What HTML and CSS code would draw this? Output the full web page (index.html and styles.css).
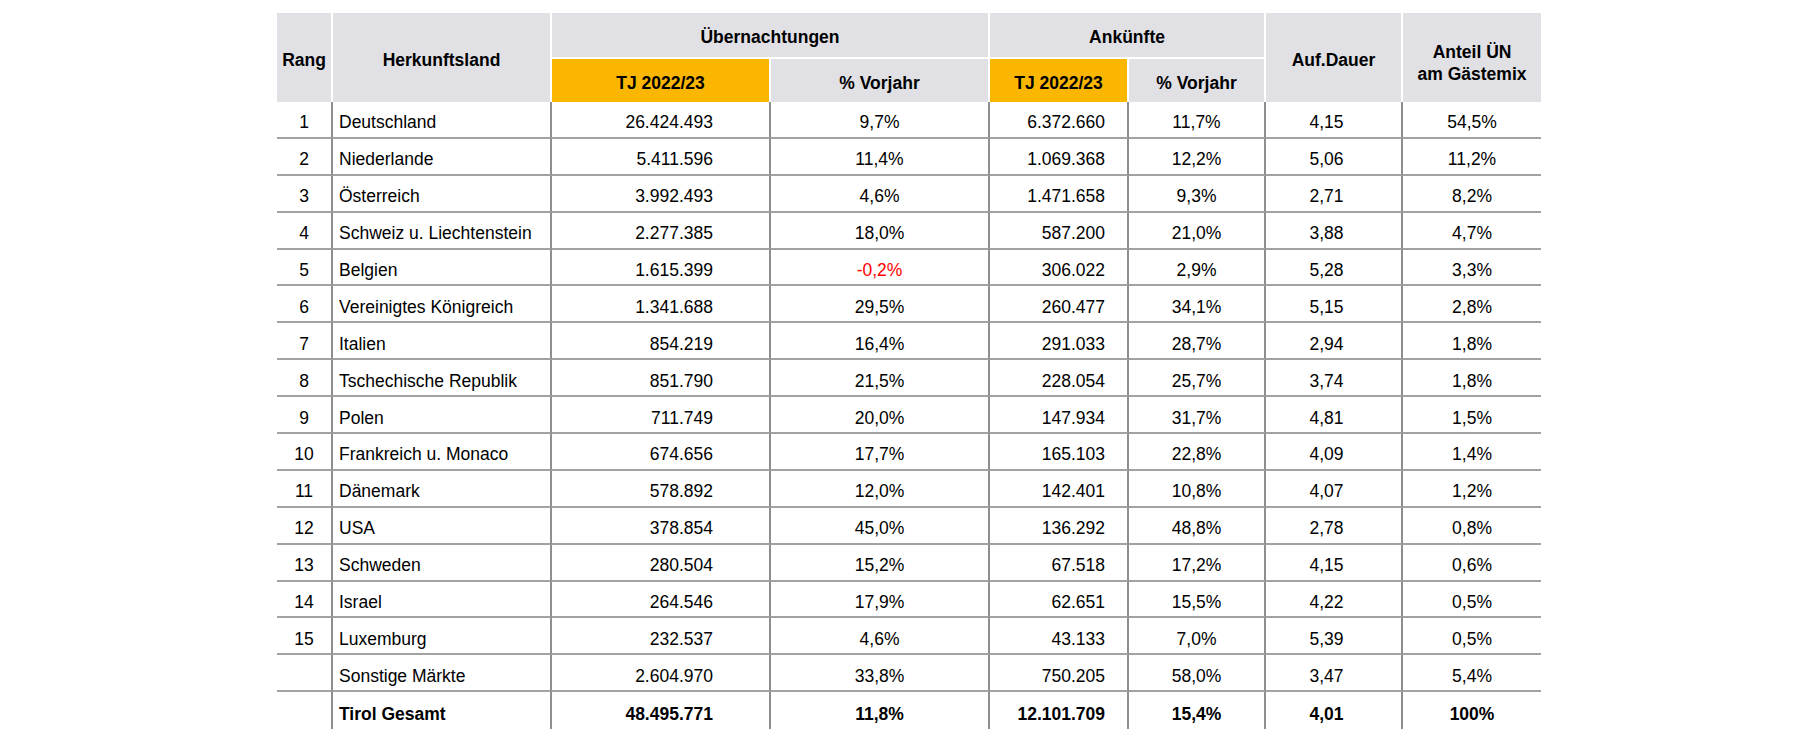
FILE: index.html
```html
<!DOCTYPE html>
<html lang="de">
<head>
<meta charset="utf-8">
<title>Herkunftsländer Tirol TJ 2022/23</title>
<link rel="stylesheet" href="styles.css">
</head>
<body>
<div class="page">
<table class="stats">
  <colgroup>
    <col class="c-rang"><col class="c-land"><col class="c-ue"><col class="c-uep"><col class="c-an"><col class="c-anp"><col class="c-auf"><col class="c-ant">
  </colgroup>
  <thead>
    <tr class="h1">
      <th rowspan="2">Rang</th>
      <th rowspan="2">Herkunftsland</th>
      <th colspan="2" class="grp">Übernachtungen</th>
      <th colspan="2" class="grp">Ankünfte</th>
      <th rowspan="2">Auf.Dauer</th>
      <th rowspan="2" class="last two">Anteil ÜN<br>am Gästemix</th>
    </tr>
    <tr class="h2">
      <th class="tj">TJ 2022/23</th>
      <th>% Vorjahr</th>
      <th class="tj">TJ 2022/23</th>
      <th>% Vorjahr</th>
    </tr>
  </thead>
  <tbody>
    <tr><td class="rang">1</td><td class="land">Deutschland</td><td class="ue">26.424.493</td><td class="pct">9,7%</td><td class="an">6.372.660</td><td class="pct">11,7%</td><td class="auf">4,15</td><td class="ant">54,5%</td></tr>
    <tr><td class="rang">2</td><td class="land">Niederlande</td><td class="ue">5.411.596</td><td class="pct">11,4%</td><td class="an">1.069.368</td><td class="pct">12,2%</td><td class="auf">5,06</td><td class="ant">11,2%</td></tr>
    <tr><td class="rang">3</td><td class="land">Österreich</td><td class="ue">3.992.493</td><td class="pct">4,6%</td><td class="an">1.471.658</td><td class="pct">9,3%</td><td class="auf">2,71</td><td class="ant">8,2%</td></tr>
    <tr><td class="rang">4</td><td class="land">Schweiz u. Liechtenstein</td><td class="ue">2.277.385</td><td class="pct">18,0%</td><td class="an">587.200</td><td class="pct">21,0%</td><td class="auf">3,88</td><td class="ant">4,7%</td></tr>
    <tr><td class="rang">5</td><td class="land">Belgien</td><td class="ue">1.615.399</td><td class="pct neg">-0,2%</td><td class="an">306.022</td><td class="pct">2,9%</td><td class="auf">5,28</td><td class="ant">3,3%</td></tr>
    <tr><td class="rang">6</td><td class="land">Vereinigtes Königreich</td><td class="ue">1.341.688</td><td class="pct">29,5%</td><td class="an">260.477</td><td class="pct">34,1%</td><td class="auf">5,15</td><td class="ant">2,8%</td></tr>
    <tr><td class="rang">7</td><td class="land">Italien</td><td class="ue">854.219</td><td class="pct">16,4%</td><td class="an">291.033</td><td class="pct">28,7%</td><td class="auf">2,94</td><td class="ant">1,8%</td></tr>
    <tr><td class="rang">8</td><td class="land">Tschechische Republik</td><td class="ue">851.790</td><td class="pct">21,5%</td><td class="an">228.054</td><td class="pct">25,7%</td><td class="auf">3,74</td><td class="ant">1,8%</td></tr>
    <tr><td class="rang">9</td><td class="land">Polen</td><td class="ue">711.749</td><td class="pct">20,0%</td><td class="an">147.934</td><td class="pct">31,7%</td><td class="auf">4,81</td><td class="ant">1,5%</td></tr>
    <tr><td class="rang">10</td><td class="land">Frankreich u. Monaco</td><td class="ue">674.656</td><td class="pct">17,7%</td><td class="an">165.103</td><td class="pct">22,8%</td><td class="auf">4,09</td><td class="ant">1,4%</td></tr>
    <tr><td class="rang">11</td><td class="land">Dänemark</td><td class="ue">578.892</td><td class="pct">12,0%</td><td class="an">142.401</td><td class="pct">10,8%</td><td class="auf">4,07</td><td class="ant">1,2%</td></tr>
    <tr><td class="rang">12</td><td class="land">USA</td><td class="ue">378.854</td><td class="pct">45,0%</td><td class="an">136.292</td><td class="pct">48,8%</td><td class="auf">2,78</td><td class="ant">0,8%</td></tr>
    <tr><td class="rang">13</td><td class="land">Schweden</td><td class="ue">280.504</td><td class="pct">15,2%</td><td class="an">67.518</td><td class="pct">17,2%</td><td class="auf">4,15</td><td class="ant">0,6%</td></tr>
    <tr><td class="rang">14</td><td class="land">Israel</td><td class="ue">264.546</td><td class="pct">17,9%</td><td class="an">62.651</td><td class="pct">15,5%</td><td class="auf">4,22</td><td class="ant">0,5%</td></tr>
    <tr><td class="rang">15</td><td class="land">Luxemburg</td><td class="ue">232.537</td><td class="pct">4,6%</td><td class="an">43.133</td><td class="pct">7,0%</td><td class="auf">5,39</td><td class="ant">0,5%</td></tr>
    <tr><td class="rang"></td><td class="land">Sonstige Märkte</td><td class="ue">2.604.970</td><td class="pct">33,8%</td><td class="an">750.205</td><td class="pct">58,0%</td><td class="auf">3,47</td><td class="ant">5,4%</td></tr>
    <tr class="total"><td class="rang"></td><td class="land">Tirol Gesamt</td><td class="ue">48.495.771</td><td class="pct">11,8%</td><td class="an">12.101.709</td><td class="pct">15,4%</td><td class="auf">4,01</td><td class="ant">100%</td></tr>
  </tbody>
</table>
</div>
</body>
</html>
```

FILE: styles.css
```css
html, body {
  margin: 0;
  padding: 0;
  background: #ffffff;
}

.page {
  padding: 13px 0 0 277px;
}

.stats {
  border-collapse: separate;
  border-spacing: 0;
  table-layout: fixed;
  width: 1264px;
  font-family: "Liberation Sans", Arial, sans-serif;
  font-size: 17.5px;
  color: #000;
}

.c-rang { width: 56px; }
.c-land { width: 219px; }
.c-ue { width: 219px; }
.c-uep { width: 219px; }
.c-an { width: 139px; }
.c-anp { width: 137px; }
.c-auf { width: 137px; }
.c-ant { width: 138px; }

.stats th {
  background: #e1e0e5;
  font-weight: bold;
  text-align: center;
  vertical-align: middle;
  padding: 4px 0 0 0;
  border-right: 2px solid #ffffff;
  line-height: 22px;
}

.stats th.last {
  border-right: none;
}

.stats th.two {
  padding-top: 11px;
}

.stats tr.h1 {
  height: 46px;
}

.stats tr.h1 th.grp {
  border-bottom: 2px solid #ffffff;
}

.stats tr.h2 {
  height: 43px;
}

.stats th.tj {
  background: #fab600;
}

.stats td {
  height: 36.9px;
  padding: 7px 0 0 0;
  vertical-align: middle;
  border-right: 2px solid #8e8e8e;
  border-bottom: 2px solid #a2a2a2;
  box-sizing: border-box;
  white-space: nowrap;
}

.stats td.ant {
  border-right: none;
}

.stats tr.total td {
  border-bottom: none;
  font-weight: bold;
}

.rang { text-align: center; }
.land { text-align: left; padding-left: 6px !important; }
.ue { text-align: right; padding-right: 56px !important; }
.pct { text-align: center; }
.an { text-align: right; padding-right: 22px !important; }
.auf { text-align: center; padding-right: 14px !important; }
.ant { text-align: center; }

.neg { color: #ff0000; }
```
